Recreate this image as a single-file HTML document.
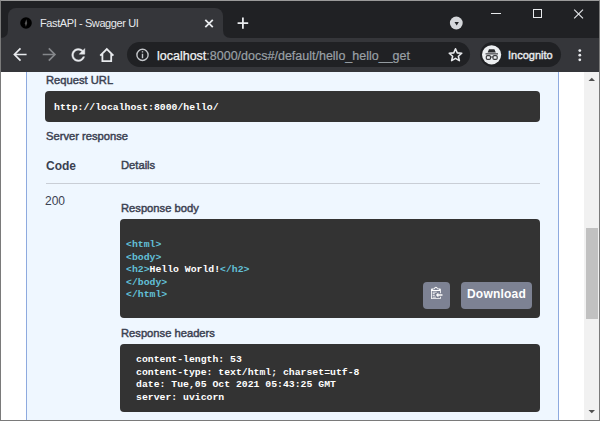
<!DOCTYPE html>
<html><head><meta charset="utf-8">
<style>
*{margin:0;padding:0;box-sizing:border-box}
html,body{width:600px;height:421px;overflow:hidden;background:#fff}
body{position:relative;font-family:"Liberation Sans",sans-serif}
.a{position:absolute;white-space:nowrap}
#frame{position:absolute;left:0;top:0;width:600px;height:421px;border:1px solid #7a7a7a;border-top-color:#9a9a9a;pointer-events:none;z-index:50}
#titlebar{left:1px;top:1px;width:598px;height:37px;background:#202124}
#tab{left:8px;top:8px;width:215px;height:31px;background:#35363a;border-radius:8px 8px 0 0}
#toolbar{left:1px;top:38px;width:598px;height:34px;background:#35363a}
#omni{left:127px;top:42px;width:343px;height:25px;background:#202124;border-radius:13px}
#incog{left:480px;top:42px;width:81px;height:25px;background:#202124;border-radius:13px}
#content{left:1px;top:72px;width:583px;height:348px;background:#fff}
#op{left:26px;top:72px;width:533px;height:348px;background:#eff7ff;border-left:1px solid #8eaadf;border-right:1px solid #8eaadf}
#sb{left:584px;top:72px;width:15px;height:348px;background:#f1f1f1}
#thumb{left:586px;top:228px;width:12px;height:91px;background:#c1c1c1}
.h{color:#3b4151;font-weight:normal;-webkit-text-stroke:0.45px #3b4151}
.hb{color:#3b4151;font-weight:bold}
.box{background:#333;border-radius:4px}
.mono{font-family:"Liberation Mono",monospace;font-weight:bold;font-size:9.8px;color:#fff}
.tag{color:#62c0d8}
.btn{background:#7d8293;border-radius:4px}
</style></head><body>
<div id="frame"></div>
<div class="a" id="titlebar"></div>
<div class="a" id="tab"></div>
<!-- tab flare -->
<svg class="a" style="left:0;top:30px" width="240" height="10"><path d="M0 8 Q8 8 8 0 L8 8 Z" fill="#35363a"/><path d="M223 0 Q223 8 231 8 L223 8 Z" fill="#35363a"/></svg>
<!-- favicon -->
<svg class="a" style="left:20px;top:17px" width="12" height="12"><circle cx="6" cy="6" r="5.8" fill="#000"/><path d="M6.3 2.2 L7.2 6 L5.9 9.8 L4.9 6.2 Z" fill="#555"/></svg>
<div class="a" style="left:40px;top:16px;font-size:11px;letter-spacing:-0.4px;color:#e8eaed;line-height:14px">FastAPI - Swagger UI</div>
<svg class="a" style="left:200px;top:15px" width="18" height="16" viewBox="200 15 18 16"><path d="M205.3 19.8 L212.8 27.2 M212.8 19.8 L205.3 27.2" stroke="#e8eaed" stroke-width="1.8"/></svg>
<svg class="a" style="left:235px;top:15px" width="16" height="16" viewBox="235 15 16 16"><path d="M242.9 17.6 V28.8 M237.6 23.2 H248.2" stroke="#e8eaed" stroke-width="1.8"/></svg>
<!-- tab search -->
<svg class="a" style="left:446px;top:14px" width="22" height="20" viewBox="446 14 22 20"><circle cx="456.3" cy="23" r="6.4" fill="#d5d7db"/><path d="M454.5 21.9 L458.9 21.9 L456.7 25.6 Z" fill="#202124"/></svg>
<!-- window controls -->
<div class="a" style="left:491px;top:13px;width:10px;height:1px;background:#e8eaed"></div>
<div class="a" style="left:533px;top:9px;width:9px;height:9px;border:1px solid #e8eaed"></div>
<svg class="a" style="left:570px;top:6px" width="16" height="16" viewBox="570 6 16 16"><path d="M574.2 9.6 L583 18.4 M583 9.6 L574.2 18.4" stroke="#e0e2e5" stroke-width="1.2"/></svg>
<div class="a" id="toolbar"></div>
<!-- nav icons -->
<svg class="a" style="left:0;top:40px" width="130" height="30" viewBox="0 40 130 30">
<path d="M26.6 54.5 H15 M20.5 48.3 L14.4 54.5 L20.5 60.7" stroke="#e8eaed" stroke-width="1.7" fill="none"/>
<path d="M42.7 54.5 H54.3 M48.8 48.3 L54.9 54.5 L48.8 60.7" stroke="#85878b" stroke-width="1.7" fill="none"/>
<g transform="translate(68.55 45.25) scale(0.8125)"><path fill="#e8eaed" stroke="#e8eaed" stroke-width="0.5" d="M17.65 6.35C16.2 4.9 14.21 4 12 4c-4.420 0-7.990 3.580-7.990 8s3.570 8 7.990 8c3.730 0 6.840-2.550 7.730-6h-2.080c-.820 2.330-3.040 4-5.650 4-3.310 0-6-2.690-6-6s2.690-6 6-6c1.660 0 3.140.690 4.220 1.780L13 11h7V4l-2.350 2.350z"/></g>
<path d="M100.2 55.6 L106.8 49 L113.4 55.6 M102.4 53.6 V61.1 H111.2 V53.6" stroke="#e8eaed" stroke-width="1.8" fill="none" stroke-linejoin="miter"/>
</svg>
<div class="a" id="omni"></div>
<svg class="a" style="left:132px;top:45px" width="22" height="20" viewBox="132 45 22 20"><circle cx="142.5" cy="54.9" r="5.6" stroke="#c4c7cb" stroke-width="1.4" fill="none"/><path d="M142.5 53.8 V58.2 M142.5 51.2 V52.6" stroke="#c4c7cb" stroke-width="1.4"/></svg>
<div class="a" style="left:157px;top:48px;font-size:12.5px;line-height:16px;color:#9aa0a6;-webkit-text-stroke:0.2px #9aa0a6"><span style="color:#f1f3f4;-webkit-text-stroke:0.25px #f1f3f4">localhost</span>:8000/docs#/default/hello_hello__get</div>
<svg class="a" style="left:445px;top:45px" width="22" height="20" viewBox="445 45 22 20"><path d="M455.50 48.70 L457.26 52.87 L461.78 53.26 L458.35 56.23 L459.38 60.64 L455.50 58.30 L451.62 60.64 L452.65 56.23 L449.22 53.26 L453.74 52.87 Z" stroke="#e8eaed" stroke-width="1.55" fill="none" stroke-linejoin="round"/></svg>
<div class="a" id="incog"></div>
<svg class="a" style="left:481px;top:44px" width="22" height="22" viewBox="481 44 22 22"><circle cx="491.6" cy="54.8" r="9.6" fill="#eceef0"/><path d="M487.6 52.6 L489 49.3 H494.4 L495.8 52.6 Z" fill="#2a2b2e"/><rect x="485.5" y="53" width="12.5" height="1.6" fill="#6b6c70"/><rect x="486.3" y="55.6" width="4.2" height="3.8" rx="1.2" fill="none" stroke="#3a3b3e" stroke-width="1.2"/><rect x="493" y="55.6" width="4.2" height="3.8" rx="1.2" fill="none" stroke="#3a3b3e" stroke-width="1.2"/><path d="M490.5 57 H493" stroke="#3a3b3e" stroke-width="1"/></svg>
<div class="a" style="left:508px;top:48px;font-size:11px;line-height:14px;color:#e8eaed;-webkit-text-stroke:0.4px #e8eaed">Incognito</div>
<svg class="a" style="left:577px;top:48px" width="6" height="14" viewBox="577 48 6 14"><circle cx="579.8" cy="50.6" r="1.4" fill="#e8eaed"/><circle cx="579.8" cy="55.2" r="1.4" fill="#e8eaed"/><circle cx="579.8" cy="59.8" r="1.4" fill="#e8eaed"/></svg>

<div class="a" id="content"></div>
<div class="a" id="op"></div>
<div class="a" id="sb"></div>
<div class="a" id="thumb"></div>
<svg class="a" style="left:586px;top:76px" width="10" height="8"><path d="M2.5 5 L5.8 1.7 L9 5 Z" fill="#505050"/></svg>
<svg class="a" style="left:586px;top:408px" width="10" height="8"><path d="M2.5 2 L5.8 5.3 L9 2 Z" fill="#505050"/></svg>

<div class="a h" style="left:46px;top:74px;font-size:11.2px;line-height:13px">Request URL</div>
<div class="a box" style="left:45px;top:91px;width:495px;height:31px"></div>
<div class="a mono" style="left:54px;top:101px;line-height:13px">http://localhost:8000/hello/</div>
<div class="a h" style="left:46px;top:130px;font-size:11.2px;line-height:13px">Server response</div>
<div class="a hb" style="left:46px;top:159px;font-size:12px;line-height:14px">Code</div>
<div class="a h" style="left:121px;top:159px;font-size:11.2px;line-height:13px">Details</div>
<div class="a" style="left:46px;top:183px;width:494px;height:1px;background:#c9ced6"></div>
<div class="a" style="left:45px;top:194px;font-size:12px;line-height:14px;color:#3b4151">200</div>
<div class="a h" style="left:121px;top:202px;font-size:11.2px;line-height:13px">Response body</div>
<div class="a box" style="left:120px;top:219px;width:420px;height:99px"></div>
<div class="a mono" style="left:126px;top:239px;line-height:12.5px"><span class="tag">&lt;html&gt;</span><br><span class="tag">&lt;body&gt;</span><br><span class="tag">&lt;h2&gt;</span>Hello World!<span class="tag">&lt;/h2&gt;</span><br><span class="tag">&lt;/body&gt;</span><br><span class="tag">&lt;/html&gt;</span></div>
<div class="a btn" style="left:423px;top:282px;width:27px;height:27px"></div>
<svg class="a" style="left:431.4px;top:286px" width="11.5" height="13.1" viewBox="0 0 14 16"><path fill="#fff" fill-rule="evenodd" d="M2 13h4v1H2v-1zm5-6H2v1h5V7zm2 3V8l-3 3 3 3v-2h5v-2H9zM4.5 9H2v1h2.5V9zM2 12h2.5v-1H2v1zm9 1h1v2c-.02.28-.11.52-.3.7-.19.18-.42.28-.7.3H1c-.55 0-1-.45-1-1V4c0-.55.45-1 1-1h3c0-1.110.89-2 2-2 1.11 0 2 .89 2 2h3c.55 0 1 .45 1 1v5h-1V6H1v9h10v-2zM2 5h8c0-.55-.45-1-1-1H8c-.55 0-1-.45-1-1s-.45-1-1-1-1 .45-1 1-.45 1-1 1H3c-.55 0-1 .45-1 1z"/></svg>
<div class="a btn" style="left:461px;top:282px;width:70.5px;height:27px"></div>
<div class="a" style="left:467px;top:287px;font-size:12px;line-height:14px;font-weight:bold;color:#fff;letter-spacing:0.2px">Download</div>
<div class="a h" style="left:121px;top:327px;font-size:11.2px;line-height:13px">Response headers</div>
<div class="a box" style="left:120px;top:344px;width:420px;height:68px"></div>
<div class="a mono" style="left:136px;top:354px;line-height:12.6px">content-length: 53<br>content-type: text/html; charset=utf-8<br>date: Tue,05 Oct 2021 05:43:25 GMT<br>server: uvicorn</div>
</body></html>
